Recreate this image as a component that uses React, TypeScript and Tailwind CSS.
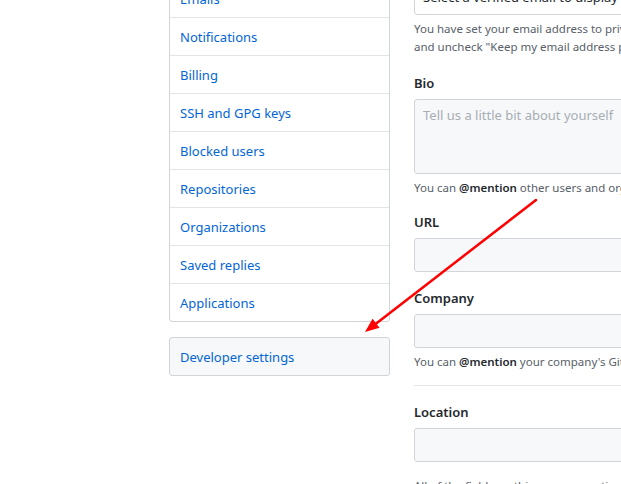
const navItems = [
  "Emails",
  "Notifications",
  "Billing",
  "SSH and GPG keys",
  "Blocked users",
  "Repositories",
  "Organizations",
  "Saved replies",
  "Applications",
];

function Field({ label, children }: { label: string; children?: React.ReactNode }) {
  return (
    <div>
      <div className="h-5 text-[13px] leading-5 font-semibold text-[#24292e]">{label}</div>
      <div className="mt-[6px] h-[34px] rounded-[3px] border border-[#d1d5da] bg-[#f6f8fa]" />
      {children}
    </div>
  );
}

export default function App() {
  return (
    <div
      className="relative w-[621px] h-[484px] overflow-hidden bg-white"
      style={{ fontFamily: '"Noto Sans", "Open Sans", sans-serif' }}
    >
      <div className="flex gap-6 pl-[169px] -mt-[21px]">
        {/* Sidebar */}
        <div className="w-[221px] shrink-0">
          <nav className="rounded-[3px] border border-[#d1d5da] bg-white">
            {navItems.map((item, i) =>
              i < navItems.length - 1 ? (
                <div
                  key={item}
                  className="flex h-[38px] items-center border-b border-[#e1e4e8] pl-[10px] pt-[2px] text-[13px] text-[#0366d6]"
                >
                  {item}
                </div>
              ) : (
                <div key={item} className="flex h-[37px] items-center pl-[10px] pt-[2px] text-[13px] text-[#0366d6]">
                  {item}
                </div>
              )
            )}
          </nav>
          <div className="mt-[15px] flex h-[39px] items-center rounded-[3px] border border-[#d1d5da] bg-[#f6f8fa] pl-[10px] pt-[2px] text-[13px] text-[#0366d6]">
            Developer settings
          </div>
        </div>

        {/* Profile form */}
        <div className="w-[460px] shrink-0 mt-[2px]">
          <div className="flex h-[34px] items-center rounded-[3px] border border-[#d1d5da] bg-white pl-2 text-[13px] text-[#24292e]">
            Select a verified email to display
          </div>
          <p className="mt-[5px] whitespace-nowrap text-[11.5px] leading-[18px] text-[#586069]">
            You have set your email address to private. To toggle email privacy, go to email settings
            <br />
            and uncheck "Keep my email address private."
          </p>

          <div className="mt-[17px] h-5 text-[13px] leading-5 font-semibold text-[#24292e]">Bio</div>
          <div className="mt-[6px] h-[75px] rounded-[3px] border border-[#d1d5da] bg-[#f6f8fa] px-2 pt-[6px] text-[13px] text-[#a8adb3]">
            Tell us a little bit about yourself
          </div>
          <p className="mt-[5px] whitespace-nowrap text-[11.5px] leading-[18px] text-[#586069]">
            You can <span className="font-semibold text-[#24292e]">@mention</span> other users and organizations to link to them.
          </p>

          <div className="mt-[15px]">
            <Field label="URL" />
          </div>
          <div className="mt-[16px]">
            <Field label="Company">
              <p className="mt-[5px] whitespace-nowrap text-[11.5px] leading-[18px] text-[#586069]">
                You can <span className="font-semibold text-[#24292e]">@mention</span> your company's GitHub organization to link it.
              </p>
            </Field>
          </div>

          <hr className="mt-[14px] border-t border-[#e1e4e8]" />

          <div className="mt-[16px]">
            <Field label="Location">
              <p className="mt-[15px] whitespace-nowrap text-[11.5px] leading-[18px] text-[#586069]">
                All of the fields on this page are optional and can be deleted at any time.
              </p>
            </Field>
          </div>
        </div>
      </div>

      {/* Annotation arrow */}
      <svg className="pointer-events-none absolute left-0 top-0" width="621" height="484">
        <line x1="536" y1="200" x2="373" y2="326" stroke="#ff0000" strokeWidth="2.5" strokeLinecap="round" />
        <polygon points="365,332 379.5,327.8 372.5,318.8" fill="#ff0000" />
      </svg>
    </div>
  );
}
